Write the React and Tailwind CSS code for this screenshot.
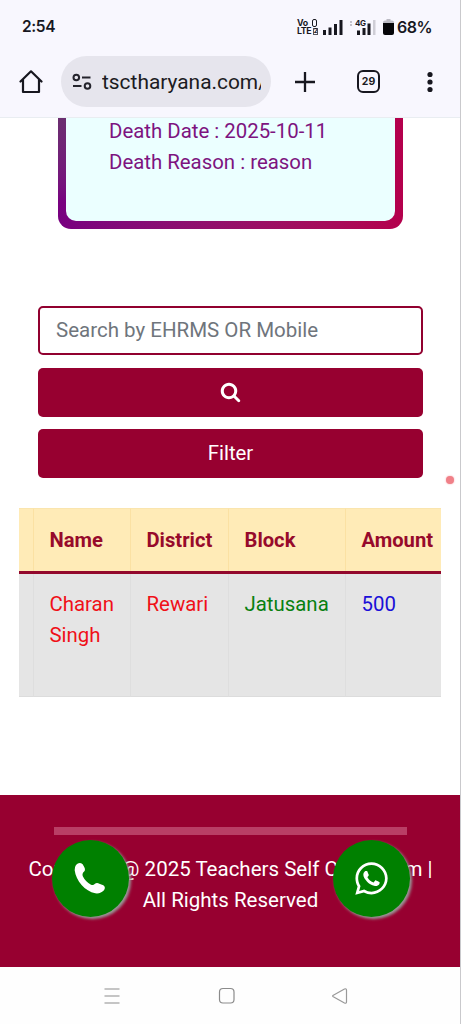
import React from "react";
import { FaWhatsapp } from "react-icons/fa";

const columns = [
  { head: "", value: "", color: "" },
  { head: "Name", value: "Charan Singh", color: "text-[#f01018]" },
  { head: "District", value: "Rewari", color: "text-[#f01018]" },
  { head: "Block", value: "Jatusana", color: "text-[#088010]" },
  { head: "Amount", value: "500", color: "text-[#1a10d8]" },
];

function StatusBar() {
  return (
    <div className="flex h-[54px] items-center justify-between pl-[22px] pr-[30px] font-['Inter',sans-serif] font-semibold text-[#17171f]">
      <span className="text-[15.5px] leading-none tracking-[-0.4px]">2:54</span>
      <div className="flex items-center">
        <div className="w-[21px] whitespace-nowrap text-[8.8px] font-bold leading-[8px] tracking-[-0.4px]">
          <div className="flex justify-between">
            <span>Vo</span>
            <span className="mr-px h-[8px] w-[5px] rounded-xs border-[1.5px] border-[#17171f]" />
          </div>
          <div className="flex items-center justify-between">
            <span>LTE</span>
            <span className="flex h-[7px] w-[5px] items-center justify-center border border-[#55555d] text-[6px]">2</span>
          </div>
        </div>
        <svg className="ml-[5px]" width="20" height="16" viewBox="0 0 20 16" fill="#17171f">
          <rect x="0" y="11" width="3" height="5" />
          <rect x="5.500" y="8.500" width="3" height="7.500" />
          <rect x="11" y="5" width="3" height="11" />
          <rect x="16.500" y="1" width="3" height="15" />
        </svg>
        <svg className="ml-[6px]" width="29" height="17" viewBox="0 0 29 17" fill="#17171f">
          <path d="M1 2h2v2H1zM1 5h2v2H1z" fill="#c4c3cc" />
          <text x="6" y="7" fontSize="8" fontWeight="700" fontFamily="Inter, sans-serif" letterSpacing="-0.5">4G</text>
          <rect x="8" y="11.500" width="3" height="4.500" />
          <rect x="13.500" y="9" width="3" height="7" />
          <rect x="18.500" y="4.500" width="3" height="11.500" />
          <rect x="24" y="1" width="2.500" height="15" fill="#cfced6" />
        </svg>
        <svg className="ml-[5px]" width="11" height="17" viewBox="0 0 11 17">
          <path d="M3.500 0h4v1.500H9a2 2 0 0 1 2 2V8H0V3.500a2 2 0 0 1 2-2h1.500z" fill="#bcbbc4" />
          <path d="M0 4h11V14a2 2 0 0 1-2 2H2a2 2 0 0 1-2-2z" fill="#050508" />
        </svg>
        <span className="ml-[3px] w-[34px] whitespace-nowrap text-[16px] leading-none tracking-[-0.5px]">68%</span>
      </div>
    </div>
  );
}

function BrowserBar() {
  return (
    <div className="flex h-[63px] items-center pt-px pb-[9px] font-[Roboto,sans-serif] text-[#1b1b22]">
      <svg className="ml-[19px] shrink-0" width="24" height="24" viewBox="0 0 24 24" fill="none" stroke="#17171f" strokeWidth="2.200" strokeLinejoin="round" strokeLinecap="round">
        <path d="M1.500 11.500 12 1.300 22.500 11.500M4 9.500v12.500h16V9.500" />
      </svg>
      <div className="ml-[18px] flex h-[51px] w-[210px] shrink-0 items-center overflow-hidden rounded-full bg-[#e6e5ed] pl-[11px] pr-[10px]">
        <svg className="shrink-0" width="20" height="18" viewBox="0 0 20 18" fill="none" stroke="#24242c" strokeWidth="2">
          <circle cx="4.300" cy="4.500" r="2.800" />
          <path d="M10 4.500h8.500M1 13h8.500" />
          <circle cx="15.500" cy="13" r="2.800" />
        </svg>
        <span className="ml-[10px] overflow-hidden whitespace-nowrap text-[20.9px] leading-[30px]">tsctharyana.com/</span>
      </div>
      <svg className="ml-[23px] shrink-0" width="22" height="22" viewBox="0 0 22 22" stroke="#17171f" strokeWidth="2.300">
        <path d="M11 1v20M1 11h20" />
      </svg>
      <div className="ml-[41px] flex h-[23px] w-[23px] shrink-0 items-center justify-center rounded-[6px] border-2 border-[#17171f] font-['Inter',sans-serif] text-[10.5px] font-bold">29</div>
      <svg className="ml-[46px] shrink-0" width="8" height="22" viewBox="0 0 8 22" fill="#17171f">
        <circle cx="4" cy="3.500" r="2.600" />
        <circle cx="4" cy="11" r="2.600" />
        <circle cx="4" cy="18.500" r="2.600" />
      </svg>
    </div>
  );
}

function DetailCard() {
  return (
    <div className="ml-[58px] flow-root h-[111px] w-[345px] overflow-hidden rounded-b-[13px] bg-linear-to-r from-[#780080] to-[#b4004c] px-[8px] pb-[8px]">
      <div className="relative h-full">
        <div className="absolute top-0 -left-[8px] h-[85px] w-[8px] bg-linear-to-b from-[#6b2e70] to-[#780080]" />
        <div className="flow-root h-full rounded-b-[10px] bg-[#ebffff] pl-[43px] text-[20.4px] leading-[30.7px] text-[#7d147f]">
          <div className="-mt-[2px]">
            <p>Death Date : 2025-10-11</p>
            <p>Death Reason : reason</p>
          </div>
        </div>
      </div>
    </div>
  );
}

function SearchForm() {
  return (
    <form className="mx-[38px] mt-[77px] flex flex-col gap-[12.5px]" onSubmit={(e) => e.preventDefault()}>
      <input
        className="h-[49px] w-[385px] rounded-[5px] border-[2.500px] border-[#91002f] bg-white px-[16px] pb-[2px] text-[20.5px] placeholder:text-[#6f757c] placeholder:opacity-100 outline-none"
        placeholder="Search by EHRMS OR Mobile"
      />
      <button aria-label="Search" className="flex h-[49px] w-[385px] items-center justify-center rounded-[5px] bg-[#970030]">
        <svg width="21" height="21" viewBox="0 64 1792 1792" fill="#fff">
          <path d="M1216 832q0-185-131.500-316.500t-316.500-131.500-316.500 131.500-131.500 316.500 131.500 316.500 316.500 131.500 316.500-131.500 131.500-316.500zm512 832q0 52-38 90t-90 38q-54 0-90-38l-343-342q-179 124-399 124-143 0-273.500-55.500t-225-150-150-225-55.500-273.500 55.500-273.500 150-225 225-150 273.500-55.500 273.500 55.500 225 150 150 225 55.500 273.500q0 220-124 399l343 343q37 37 37 90z" />
        </svg>
      </button>
      <button className="h-[49px] w-[385px] rounded-[5px] bg-[#970030] pb-px text-[20.4px] leading-[30px] text-white">Filter</button>
    </form>
  );
}

function Donations() {
  return (
    <div className="ml-[19px] mt-[30px] grid w-[422px] grid-cols-[14px_97px_98px_117px_96px]">
      {columns.map((c, i) => (
        <div key={i} className={"h-[63px] overflow-hidden whitespace-nowrap border-t border-t-[#fae5ae] bg-[#ffebb7] pt-[16px] text-[20.2px] font-bold leading-[31px] text-[#970a2b] " + (i ? "border-l border-l-[#fbe1a3] pl-[15.5px]" : "")}>
          {c.head}
        </div>
      ))}
      <div className="col-span-full h-[3px] bg-[#92082c]" />
      {columns.map((c, i) => (
        <div key={i} className={"h-[123px] border-b border-b-[#dcdcdc] bg-[#e5e5e5] pt-[15px] text-[20.4px] leading-[30.7px] " + c.color + (i ? " border-l border-l-[#dedede] pl-[15.5px]" : "")}>
          {c.value}
        </div>
      ))}
    </div>
  );
}

function Footer() {
  return (
    <footer className="relative h-[172px] bg-[#970030] pt-[32px] text-center text-[20.5px] leading-[30.7px] text-white">
      <div className="mx-[54px] mb-[19px] h-[8px] bg-[#b93e65]" />
      <p className="whitespace-nowrap">
        Copyright @ 2025 Teachers Self Care Team |
        <br />
        All Rights Reserved
      </p>
      <a aria-label="Call" className="absolute left-[51.5px] top-[45px] flex h-[77px] w-[77px] items-center justify-center rounded-full bg-[#008000] shadow-[2px_2px_3px_#999]">
        <svg width="40" height="40" viewBox="90 99 120 120" fill="#fff">
          <path d="M108 117Q118 106 128 115L133 124Q138 134 130 139Q126 144 128 150Q136 167 153 176Q160 179 164 174Q170 169 178 173L190 178Q198 184 192 193Q182 204 166 202C135 196 108 165 104 133Q103 124 108 117Z" />
        </svg>
      </a>
      <a aria-label="WhatsApp" className="absolute left-[333px] top-[45px] flex h-[77px] w-[77px] items-center justify-center rounded-full bg-[#008000] shadow-[2px_2px_3px_#999]">
        <FaWhatsapp size={37} color="#fff" />
      </a>
    </footer>
  );
}

function NavBar() {
  return (
    <nav className="flex h-[57px] items-center bg-[#fefefe] pl-[104px]">
      <svg width="16" height="18" viewBox="0 0 16 18" stroke="#8b8b8b" strokeWidth="1.200">
        <path d="M0.500 2h15M0.500 9h15M0.500 16h15" />
      </svg>
      <svg className="ml-[98px]" width="18" height="18" viewBox="0 0 18 18" fill="none" stroke="#8b8b8b" strokeWidth="1.200">
        <rect x="1.500" y="1.500" width="14.500" height="14.500" rx="3.500" />
      </svg>
      <svg className="ml-[95px]" width="18" height="18" viewBox="0 0 18 18" fill="none" stroke="#999" strokeWidth="1.200" strokeLinejoin="round">
        <path d="M2.300 8.200 13.500 2Q15.500 1.200 15.500 3.300V14.700Q15.500 16.800 13.500 16L2.300 9.800Q1 9 2.300 8.200Z" />
      </svg>
    </nav>
  );
}

export default function App() {
  return (
    <div className="relative h-[1024px] w-[461px] overflow-hidden bg-white font-[Roboto,sans-serif]">
      <header className="h-[118px] border-b border-[#e9edf1] bg-[#f8f7fe]">
        <StatusBar />
        <BrowserBar />
      </header>
      <main className="flow-root h-[677px]">
        <DetailCard />
        <SearchForm />
        <Donations />
      </main>
      <Footer />
      <NavBar />
      <span className="absolute left-[446px] top-[475.500px] h-[8px] w-[8px] rounded-full bg-[#f08088] shadow-[0_0_2px_#f6a8ad]" />
      <span className="absolute right-0 top-0 h-full w-px bg-[#c9c9cc]" />
    </div>
  );
}
